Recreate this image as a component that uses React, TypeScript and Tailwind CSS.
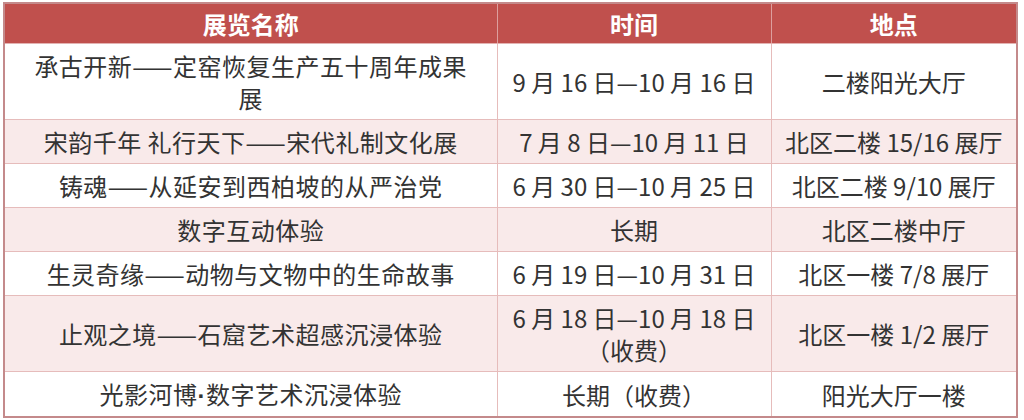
// 展览信息表
const rows = [
  { name: '承古开新——定窑恢复生产五十周年成果展', time: '9 月 16 日—10 月 16 日', place: '二楼阳光大厅' },
  { name: '宋韵千年 礼行天下——宋代礼制文化展', time: '7 月 8 日—10 月 11 日', place: '北区二楼 15/16 展厅' },
  { name: '铸魂——从延安到西柏坡的从严治党', time: '6 月 30 日—10 月 25 日', place: '北区二楼 9/10 展厅' },
  { name: '数字互动体验', time: '长期', place: '北区二楼中厅' },
  { name: '生灵奇缘——动物与文物中的生命故事', time: '6 月 19 日—10 月 31 日', place: '北区一楼 7/8 展厅' },
  { name: '止观之境——石窟艺术超感沉浸体验', time: '6 月 18 日—10 月 18 日（收费）', place: '北区一楼 1/2 展厅' },
  { name: '光影河博·数字艺术沉浸体验', time: '长期（收费）', place: '阳光大厅一楼' },
]

// 间隔号用西文字体，保持窄宽
function Name({ text }: { text: string }) {
  const parts = text.split('·')
  if (parts.length === 1) return <>{text}</>
  return (
    <>
      {parts[0]}
      <span style={{ fontFamily: '"Liberation Sans", sans-serif' }} className="font-bold">·</span>
      {parts[1]}
    </>
  )
}

export default function App() {
  return (
    <div className="w-[1024px] h-[420px] bg-white pt-[2px] pl-[3px]" style={{ fontFamily: '"Noto Sans CJK SC", "Noto Sans", sans-serif' }}>
      <div className="w-[1015px] border-2 border-[#c48a8b]">
        <table className="w-full table-fixed border-collapse text-[24px] leading-[32px] text-[#333]">
          <colgroup>
            <col className="w-[492px]" />
            <col className="w-[274px]" />
            <col />
          </colgroup>
          <thead>
            <tr className="bg-[#c0504d] text-white font-bold">
              <th className="pt-1 pb-[3px] text-center font-bold border-r border-b border-r-[#dd9f9e] border-b-[#e3b3b2]">展览名称</th>
              <th className="pt-1 pb-[3px] text-center font-bold border-r border-b border-r-[#dd9f9e] border-b-[#e3b3b2]">时间</th>
              <th className="pt-1 pb-[3px] text-center font-bold border-b border-b-[#e3b3b2]">地点</th>
            </tr>
          </thead>
          <tbody>
            {rows.map((r, i) => {
              const last = i === rows.length - 1
              const pad = last ? 'pt-[6px] pb-[4px]' : 'pt-[6px] pb-[5px] border-b'
              return (
                <tr key={r.name} className={i % 2 === 1 ? 'bg-[#f9eaea]' : 'bg-white'}>
                  <td className={`px-5 text-center tracking-[0.5px] border-r border-[#e6bcbb] ${pad}`}>
                    <Name text={r.name} />
                  </td>
                  <td className={`px-1 text-center border-r border-[#e6bcbb] ${pad}`}>{r.time}</td>
                  <td className={`px-1 text-center border-[#e6bcbb] ${pad}`}>{r.place}</td>
                </tr>
              )
            })}
          </tbody>
        </table>
      </div>
    </div>
  )
}
